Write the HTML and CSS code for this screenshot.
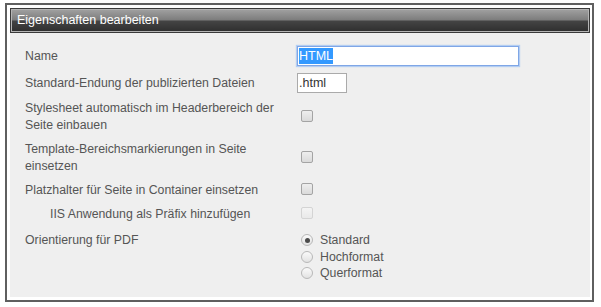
FILE: index.html
```html
<!DOCTYPE html>
<html lang="de">
<head>
    <meta charset="UTF-8">
    <title>Eigenschaften bearbeiten</title>
    <link rel="stylesheet" href="styles.css">
</head>
<body>
    <div class="dialog">
        <div class="dialog-header">Eigenschaften bearbeiten</div>
        <div class="dialog-body">
            <div class="form-row">
                <label class="form-label">Name</label>
                <div class="form-control">
                    <div class="text-field text-field-wide focused"><span class="selected">HTML</span></div>
                </div>
            </div>
            <div class="form-row">
                <label class="form-label">Standard-Endung der publizierten Dateien</label>
                <div class="form-control">
                    <div class="text-field text-field-short">.html</div>
                </div>
            </div>
            <div class="form-row">
                <label class="form-label">Stylesheet automatisch im Headerbereich der Seite einbauen</label>
                <div class="form-control"><input type="checkbox" class="check"></div>
            </div>
            <div class="form-row">
                <label class="form-label">Template-Bereichsmarkierungen in Seite einsetzen</label>
                <div class="form-control"><input type="checkbox" class="check"></div>
            </div>
            <div class="form-row">
                <label class="form-label">Platzhalter für Seite in Container einsetzen</label>
                <div class="form-control"><input type="checkbox" class="check"></div>
            </div>
            <div class="form-row">
                <label class="form-label indented">IIS Anwendung als Präfix hinzufügen</label>
                <div class="form-control"><input type="checkbox" class="check" disabled></div>
            </div>
            <div class="form-row row-top">
                <label class="form-label">Orientierung für PDF</label>
                <div class="form-control radio-group">
                    <label class="radio-option"><input type="radio" name="orient" class="radio" checked> Standard</label>
                    <label class="radio-option"><input type="radio" name="orient" class="radio"> Hochformat</label>
                    <label class="radio-option"><input type="radio" name="orient" class="radio"> Querformat</label>
                </div>
            </div>
        </div>
    </div>
</body>
</html>
```

FILE: styles.css
```css
* {
    box-sizing: border-box;
    margin: 0;
    padding: 0;
}

body {
    font-family: 'Liberation Sans', Arial, sans-serif;
    font-size: 12.3px;
    background: #fff;
    padding: 3px 0 0 5px;
}

.dialog {
    width: 589px;
    height: 299px;
    border: 2px solid #5f5f5f;
    padding: 3px 2px 3px 3px;
    display: flex;
    flex-direction: column;
}

.dialog-header {
    height: 25px;
    border: 1px solid #3a3a3a;
    box-shadow: inset 0 0 0 1px #b5b5b5;
    background: linear-gradient(to bottom, #a2a2a2 0%, #7c7c7c 48%, #444 52%, #2e2e2e 100%);
    color: #fff;
    font-size: 12.5px;
    line-height: 23px;
    padding-left: 6px;
}

.dialog-body {
    flex: 1;
    background: #efefef;
    padding: 13px 0 0 15px;
    display: flex;
    flex-direction: column;
    gap: 7px;
    color: #555;
}

.form-row {
    display: flex;
    align-items: center;
}

.form-row.row-top {
    align-items: flex-start;
    margin-top: 2px;
}

.form-label {
    width: 272px;
    padding-right: 12px;
    line-height: 17px;
}

.form-label.indented {
    padding-left: 25px;
}

.text-field {
    height: 20px;
    border: 1px solid #aaa;
    background: #fff;
    color: #333;
    font-size: 12.5px;
    line-height: 18px;
    padding-left: 1px;
}

.text-field-wide {
    width: 222px;
}

.text-field-short {
    width: 50px;
}

.text-field.focused {
    border-color: #7fa6e6;
    box-shadow: 0 0 1px 1px #b3cdf2;
}

.selected {
    background: #3399ff;
    color: #fff;
    padding: 1px 0;
}

.check,
.radio {
    appearance: none;
    -webkit-appearance: none;
    width: 12px;
    height: 12px;
    border: 1px solid #a4a4a4;
    background: linear-gradient(to bottom, #eee, #dadada);
    margin-left: 4px;
}

.check {
    border-radius: 2px;
}

.check:disabled {
    border-color: #d4d4d4;
    background: linear-gradient(to bottom, #f4f4f4, #e9e9e9);
}

.radio-group {
    display: flex;
    flex-direction: column;
}

.radio-option {
    display: flex;
    align-items: center;
    line-height: 16.5px;
    gap: 7px;
}

.radio {
    border-radius: 50%;
    border-color: #b8b8b8;
    background: linear-gradient(to bottom, #fafafa, #e2e2e2);
    position: relative;
}

.radio:checked::after {
    content: "";
    position: absolute;
    left: 2.5px;
    top: 2.5px;
    width: 5px;
    height: 5px;
    border-radius: 50%;
    background: #4a4a4a;
}
```
